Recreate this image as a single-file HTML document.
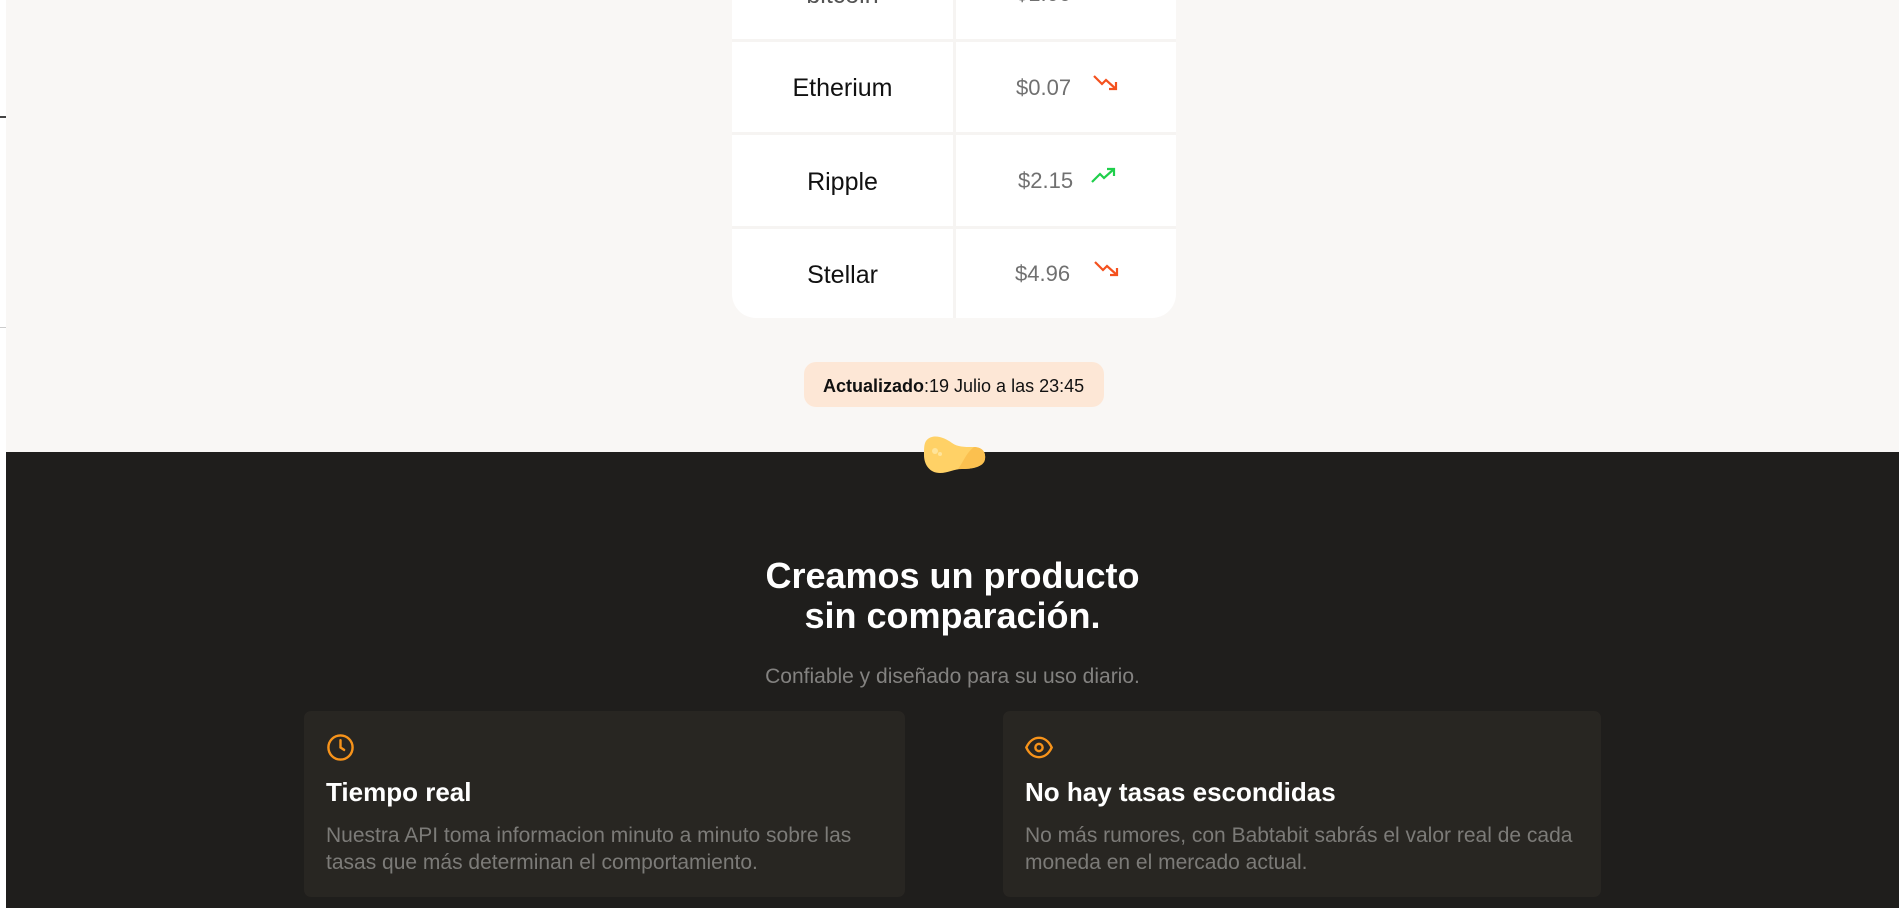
<!DOCTYPE html>
<html><head><meta charset="utf-8"><style>
*{margin:0;padding:0;box-sizing:border-box}
body{width:1899px;height:908px;overflow:hidden;background:#f9f7f5;font-family:"Liberation Sans",Arial,sans-serif;position:relative}
.strip{position:absolute;left:0;top:0;width:6px;height:908px;background:#fff;z-index:5}
.abs{position:absolute}
.table{position:absolute;left:732px;top:-60px;width:444px;height:378px;background:#fff;border-radius:0 0 24px 24px;overflow:hidden}
.vdiv{position:absolute;left:221px;top:0;width:3px;height:100%;background:#f6f4f2}
.hdiv{position:absolute;left:0;width:100%;height:3px;background:#f6f4f2}
.name{position:absolute;width:221px;text-align:center;font-size:25px;color:#111}
.price{position:absolute;left:284px;font-size:22px;color:#707070}
.arr{position:absolute;left:361px}
.dark{position:absolute;left:0;top:452px;width:1899px;height:456px;background:#1f1e1c}
.card{position:absolute;top:711px;height:186px;background:#282622;border-radius:7px;padding:0 22px}
.card h3{position:absolute;left:22px;font-size:26px;color:#fff;font-weight:bold}
.card p{font-size:21px;line-height:27px;color:#7c7b78;white-space:nowrap}
</style></head><body>
<div class="strip">
 <div class="abs" style="left:0;top:116px;width:6px;height:2px;background:#444"></div>
 <div class="abs" style="left:0;top:327px;width:6px;height:1px;background:#ccc"></div>
</div>
<div class="table">
 <div class="vdiv"></div>
 <div class="hdiv" style="top:99px"></div>
 <div class="hdiv" style="top:192px"></div>
 <div class="hdiv" style="top:286px"></div>
 <div class="name" style="top:41px;color:#555">bitcoin</div>
 <div class="price" style="top:41px">$1.00</div>
 <div class="name" style="top:134px">Etherium</div>
 <div class="price" style="left:284px;top:135px">$0.07</div>
 <svg class="arr" style="top:133px" width="26" height="20" viewBox="0 0 26 20" fill="none" stroke="#f4511e" stroke-width="2.2"><polyline points="1,3 9,11 13,7 23,16"/><polyline points="16,16 23,16 23,9"/></svg>
 <div class="name" style="top:228px">Ripple</div>
 <div class="price" style="left:286px;top:228px">$2.15</div>
 <svg class="arr" style="top:226px;left:359px" width="26" height="20" viewBox="0 0 26 20" fill="none" stroke="#1fcf4b" stroke-width="2.2"><polyline points="1,16 9,8 13,12 23,3"/><polyline points="16,3 23,3 23,10"/></svg>
 <div class="name" style="top:321px">Stellar</div>
 <div class="price" style="left:283px;top:321px">$4.96</div>
 <svg class="arr" style="top:319px;left:362px" width="26" height="20" viewBox="0 0 26 20" fill="none" stroke="#f4511e" stroke-width="2.2"><polyline points="1,3 9,11 13,7 23,16"/><polyline points="16,16 23,16 23,9"/></svg>
</div>
<div class="abs" style="left:804px;top:362px;width:300px;height:45px;background:#fde7d6;border-radius:12px;font-size:18px;color:#111;padding:15px 0 0 19px;line-height:18px"><b>Actualizado</b>:19 Julio a las 23:45</div>
<div class="dark">
 <div class="abs" style="left:0;top:148px;width:6px;height:21px;background:#0a78d4"></div>
 <div class="abs" style="left:0;top:169px;width:3px;height:39px;background:#555"></div>
 <div class="abs" style="left:3px;top:169px;width:3px;height:39px;background:#1f1e1c"></div>
</div>
<svg class="abs" style="left:922px;top:435px" width="64" height="40" viewBox="0 0 64 40">
 <path d="M4 6 C10 -2 22 2 30 8 C36 12 42 12 50 12 C60 12 64 16 63 24 C62 32 50 34 40 34 C32 34 26 38 18 38 C8 38 2 30 2 20 C2 14 2 9 4 6Z" fill="#ffd166"/>
 <path d="M36 34 C42 26 44 18 52 12 C60 12 64 17 63 24 C62 32 50 34 40 34Z" fill="#fbc04f"/>
 <circle cx="13" cy="16" r="3" fill="#ffe49a"/><circle cx="18" cy="19" r="2" fill="#ffe49a"/>
</svg>
<div class="abs" style="left:0;top:556px;width:1905px;text-align:center;font-size:36px;line-height:40px;font-weight:bold;color:#fff">Creamos un producto<br>sin comparación.</div>
<div class="abs" style="left:0;top:665px;width:1905px;text-align:center;font-size:21px;color:#838280">Confiable y diseñado para su uso diario.</div>
<div class="card" style="left:304px;width:601px">
 <svg class="abs" style="left:22px;top:22px" width="29" height="29" viewBox="0 0 24 24" fill="none" stroke="#f7931a" stroke-width="2" stroke-linecap="round"><circle cx="12" cy="12" r="10"/><polyline points="12,6 12,12 15,14"/></svg>
 <h3 style="top:66px">Tiempo real</h3>
 <p class="abs" style="left:22px;top:111px">Nuestra API toma informacion minuto a minuto sobre las<br>tasas que más determinan el comportamiento.</p>
</div>
<div class="card" style="left:1003px;width:598px">
 <svg class="abs" style="left:21px;top:22px" width="30" height="29" viewBox="0 0 24 24" fill="none" stroke="#f7931a" stroke-width="2"><path d="M1.5 12 C4 6.5 8 4 12 4 C16 4 20 6.5 22.5 12 C20 17.5 16 20 12 20 C8 20 4 17.5 1.5 12Z"/><circle cx="12" cy="12" r="3"/></svg>
 <h3 style="top:66px">No hay tasas escondidas</h3>
 <p class="abs" style="left:22px;top:111px">No más rumores, con Babtabit sabrás el valor real de cada<br>moneda en el mercado actual.</p>
</div>
</body></html>
